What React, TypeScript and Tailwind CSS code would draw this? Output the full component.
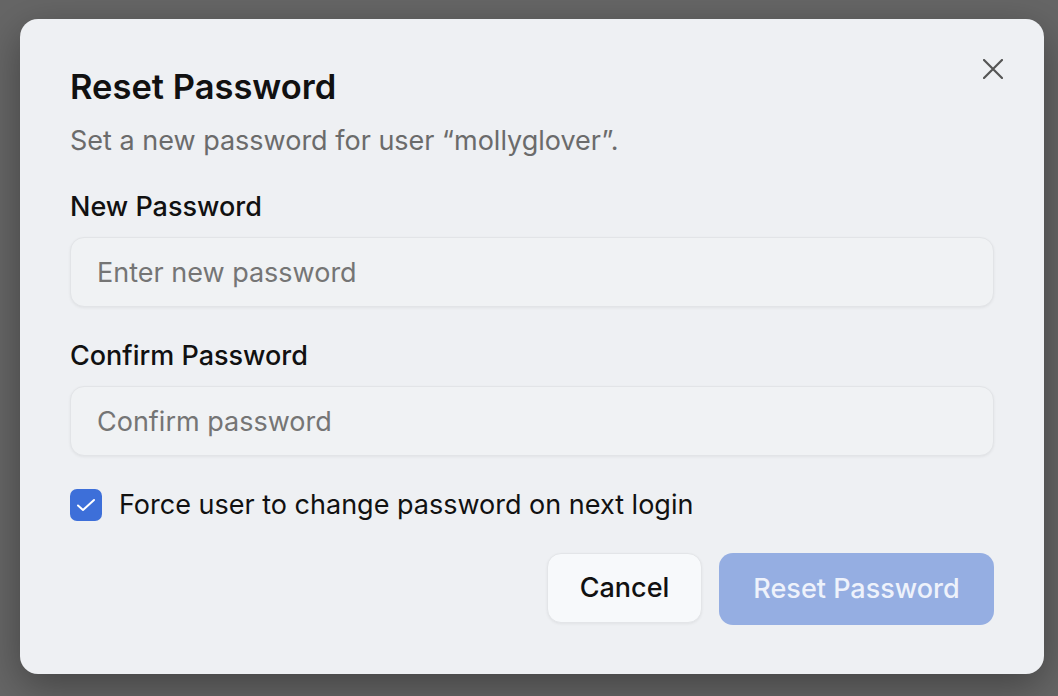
import { useState } from "react";

export default function App() {
  const [force, setForce] = useState(true);

  return (
    <div className="h-[696px] w-[1058px] overflow-hidden bg-[#666666] pl-[20px] pt-[19px] font-['Inter',sans-serif]">
      {/* Dialog */}
      <div className="relative flex h-[655px] w-[1024px] flex-col rounded-[18px] bg-[#eef0f3] px-[50px] pt-[48px] shadow-[0_12px_40px_rgba(0,0,0,0.35)]">
        <button className="absolute right-[41px] top-[40px] flex h-[20px] w-[20px] items-center justify-center text-[#555555]">
          <svg width="20" height="20" viewBox="0 0 20 20" fill="none">
            <path d="M1 1L19 19M19 1L1 19" stroke="currentColor" strokeWidth="2.2" strokeLinecap="round" />
          </svg>
        </button>

        <h2 className="text-[34.5px] font-semibold leading-[40px] text-[#111111]">
          Reset Password
        </h2>
        <p className="mt-[18px] text-[27px] leading-[32px] text-[#6b6b6b]">
          {`Set a new password for user \u201Cmollyglover\u201D.`}
        </p>

        <label className="mt-[34px] text-[27px] font-medium leading-[32px] text-[#111111]">
          New Password
        </label>
        <input
          type="password"
          placeholder="Enter new password"
          className="mt-[14px] h-[70px] w-full rounded-[14px] border border-[#e2e4e7] bg-[#f0f2f4] px-[26px] text-[27px] text-[#111111] shadow-[0_1px_3px_rgba(0,0,0,0.06)] outline-none placeholder:text-[#757575]"
        />

        <label className="mt-[33px] text-[27px] font-medium leading-[32px] text-[#111111]">
          Confirm Password
        </label>
        <input
          type="password"
          placeholder="Confirm password"
          className="mt-[14px] h-[70px] w-full rounded-[14px] border border-[#e2e4e7] bg-[#f0f2f4] px-[26px] text-[27px] text-[#111111] shadow-[0_1px_3px_rgba(0,0,0,0.06)] outline-none placeholder:text-[#757575]"
        />

        <label className="mt-[33px] flex cursor-pointer items-center gap-[17px]">
          <button
            onClick={() => setForce(!force)}
            className={`flex h-[32px] w-[32px] items-center justify-center rounded-[7px] ${
              force ? "bg-[#3d6fd9]" : "border border-[#c8cbd0] bg-white"
            }`}
          >
            {force && (
              <svg width="20" height="14" viewBox="0 0 20 14" fill="none">
                <path d="M2 7.5L7 12L18 2" stroke="white" strokeWidth="2" strokeLinecap="round" strokeLinejoin="round" />
              </svg>
            )}
          </button>
          <span className="text-[27px] leading-[32px] text-[#111111]">
            Force user to change password on next login
          </span>
        </label>

        <div className="mt-[32px] flex justify-end gap-[17px]">
          <button className="h-[70px] w-[155px] rounded-[14px] border border-[#e3e5e8] bg-[#f7f9fb] text-[27px] font-medium text-[#111111] shadow-[0_1px_3px_rgba(0,0,0,0.06)]">
            Cancel
          </button>
          <button className="h-[72px] w-[275px] rounded-[14px] bg-[#95aee2] text-[27px] font-medium text-[#eef2fb]">
            Reset Password
          </button>
        </div>
      </div>
    </div>
  );
}
